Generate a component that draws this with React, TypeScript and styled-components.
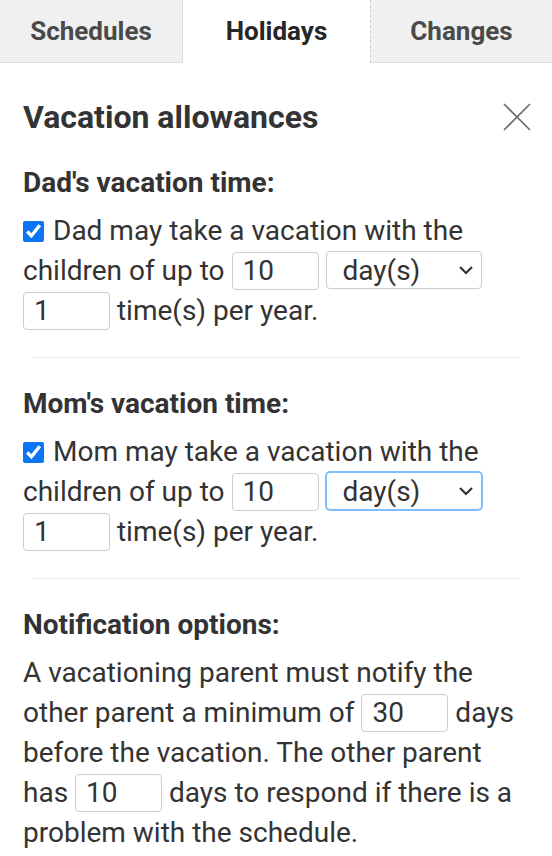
import React from "react";
import styled, { createGlobalStyle } from "styled-components";

const GlobalStyle = createGlobalStyle`
  html, body {
    margin: 0;
    padding: 0;
    background: #fff;
    font-family: Roboto, "Liberation Sans", Arial, sans-serif;
    color: #333;
  }
  * {
    box-sizing: border-box;
  }
`;

const Page = styled.div`
  width: 552px;
  min-height: 856px;
  background: #fff;
`;

const TabBar = styled.div`
  display: grid;
  grid-template-columns: 183px 187px 182px;
  height: 63px;
`;

const Tab = styled.div<{ $active?: boolean; $dashed?: boolean }>`
  display: flex;
  align-items: center;
  justify-content: center;
  font-size: 26px;
  font-weight: 700;
  color: ${(p) => (p.$active ? "#262626" : "#4a4a4a")};
  background: ${(p) => (p.$active ? "#fff" : "#f0f0f0")};
  border-bottom: 1px solid ${(p) => (p.$active ? "transparent" : "#dcdcdc")};
  border-right: ${(p) => (p.$active || p.$dashed ? "none" : "1px solid #dcdcdc")};
  border-left: ${(p) => (p.$dashed ? "1px dashed #cfcfcf" : "none")};
`;

const Content = styled.div`
  padding: 36px 22px 0 23px;
`;

const TitleRow = styled.div`
  display: flex;
  align-items: center;
  justify-content: space-between;
  height: 36px;
  margin-bottom: 33px;
`;

const Title = styled.h1`
  margin: 0;
  font-size: 32px;
  font-weight: 700;
  color: #333;
  line-height: 36px;
`;

const CloseButton = styled.button`
  width: 28px;
  height: 28px;
  padding: 0;
  margin: 0 -1px 0 0;
  border: none;
  background: transparent;
  display: flex;
  align-items: center;
  justify-content: center;
  color: #666;
`;

const SectionHeading = styled.h2`
  margin: 0 0 13px;
  font-size: 28px;
  font-weight: 700;
  line-height: 30px;
  color: #333;
`;

const Text = styled.p`
  margin: 0;
  font-size: 28px;
  line-height: 40px;
  color: #333;
`;

const Divider = styled.hr`
  margin: 26px 10px 31px 9px;
  border: none;
  border-top: 1px solid #ebebeb;
  height: 0;
`;

const Check = styled.input`
  width: 21px;
  height: 21px;
  margin: 0 9px 0 0;
  vertical-align: -2px;
  accent-color: #0b75f5;
`;

const NumberInput = styled.input`
  width: 87px;
  height: 38px;
  padding: 0 10px;
  border: 1px solid #cccccc;
  border-radius: 4px;
  font-family: inherit;
  font-size: 28px;
  color: #333;
  vertical-align: middle;
  margin-top: -4px;
  background: #fff;
  outline: none;
`;

const SelectWrap = styled.span`
  position: relative;
  display: inline-block;
  vertical-align: middle;
  margin-top: -4px;
  margin-left: 1px;
`;

const Select = styled.select<{ $focused?: boolean }>`
  appearance: none;
  width: 156px;
  height: 38px;
  padding: 0 36px 0 15px;
  border: 1px solid ${(p) => (p.$focused ? "#80bdff" : "#cccccc")};
  box-shadow: ${(p) => (p.$focused ? "0 0 0 1px #80bdff" : "none")};
  border-radius: 4px;
  font-family: inherit;
  font-size: 28px;
  color: #333;
  background: #fff;
  outline: none;
`;

const Chevron = styled.svg`
  position: absolute;
  right: 8px;
  top: 14px;
  pointer-events: none;
`;

const ChevronIcon = () => (
  <Chevron width="16" height="10" viewBox="0 0 16 10">
    <path d="M2 2 L8 8 L14 2" fill="none" stroke="#333" strokeWidth="2.2" />
  </Chevron>
);

const UnitSelect: React.FC<{ focused?: boolean }> = ({ focused }) => (
  <SelectWrap>
    <Select $focused={focused} defaultValue="day">
      <option value="day">day(s)</option>
      <option value="week">week(s)</option>
    </Select>
    <ChevronIcon />
  </SelectWrap>
);

const ParentAllowance: React.FC<{ parent: string; focused?: boolean }> = ({
  parent,
  focused,
}) => (
  <>
    <SectionHeading>{parent}'s vacation time:</SectionHeading>
    <Text>
      <Check type="checkbox" defaultChecked />
      {parent} may take a vacation with the children of up to{" "}
      <NumberInput defaultValue="10" /> <UnitSelect focused={focused} />{" "}
      <NumberInput defaultValue="1" /> time(s) per year.
    </Text>
  </>
);

export default function App() {
  return (
    <Page>
      <GlobalStyle />
      <TabBar>
        <Tab>Schedules</Tab>
        <Tab $active>Holidays</Tab>
        <Tab $dashed>Changes</Tab>
      </TabBar>
      <Content>
        <TitleRow>
          <Title>Vacation allowances</Title>
          <CloseButton aria-label="Close">
            <svg width="28" height="28" viewBox="0 0 28 28">
              <path
                d="M1 1 L27 27 M27 1 L1 27"
                stroke="#6b6b6b"
                strokeWidth="1.6"
                fill="none"
              />
            </svg>
          </CloseButton>
        </TitleRow>

        <ParentAllowance parent="Dad" />
        <Divider />
        <ParentAllowance parent="Mom" focused />
        <Divider />

        <SectionHeading>Notification options:</SectionHeading>
        <Text>
          A vacationing parent must notify the other parent a minimum of{" "}
          <NumberInput defaultValue="30" /> days before the vacation. The other
          parent has <NumberInput defaultValue="10" /> days to respond if there
          is a problem with the schedule.
        </Text>
      </Content>
    </Page>
  );
}
